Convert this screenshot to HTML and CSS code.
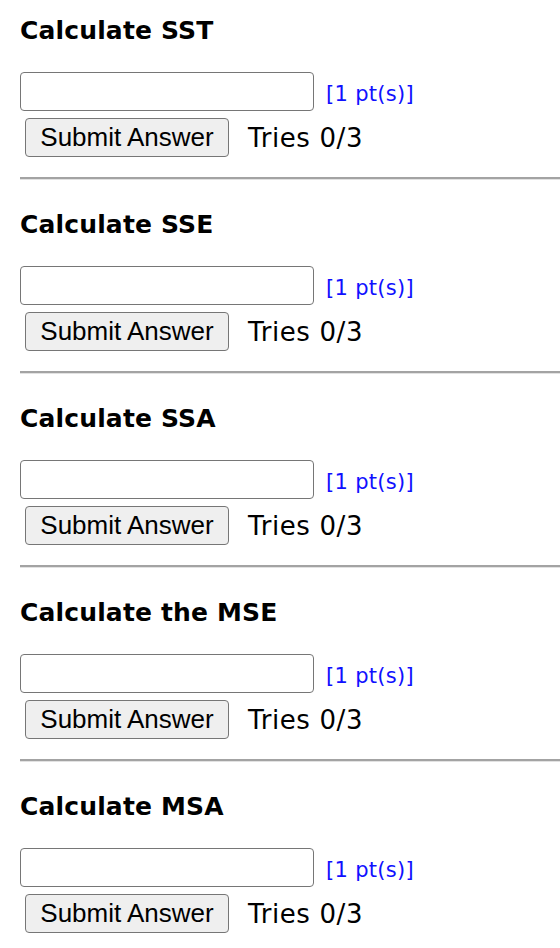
FILE: index.html
```html
<!DOCTYPE html>
<html lang="en">
<head>
    <meta charset="UTF-8">
    <meta name="viewport" content="width=device-width, initial-scale=1.0">
    <title>ANOVA questions</title>
    <link rel="stylesheet" href="styles.css">
</head>
<body>
    <div class="question">
        <h3>Calculate SST</h3>
        <div class="answer-row">
            <input type="text" class="answer">
            <span class="points">[1 pt(s)]</span>
        </div>
        <div class="submit-row">
            <button>Submit Answer</button>
            <span class="tries">Tries 0/3</span>
        </div>
    </div>
    <hr>

    <div class="question">
        <h3>Calculate SSE</h3>
        <div class="answer-row">
            <input type="text" class="answer">
            <span class="points">[1 pt(s)]</span>
        </div>
        <div class="submit-row">
            <button>Submit Answer</button>
            <span class="tries">Tries 0/3</span>
        </div>
    </div>
    <hr>

    <div class="question">
        <h3>Calculate SSA</h3>
        <div class="answer-row">
            <input type="text" class="answer">
            <span class="points">[1 pt(s)]</span>
        </div>
        <div class="submit-row">
            <button>Submit Answer</button>
            <span class="tries">Tries 0/3</span>
        </div>
    </div>
    <hr>

    <div class="question">
        <h3>Calculate the MSE</h3>
        <div class="answer-row">
            <input type="text" class="answer">
            <span class="points">[1 pt(s)]</span>
        </div>
        <div class="submit-row">
            <button>Submit Answer</button>
            <span class="tries">Tries 0/3</span>
        </div>
    </div>
    <hr>

    <div class="question">
        <h3>Calculate MSA</h3>
        <div class="answer-row">
            <input type="text" class="answer">
            <span class="points">[1 pt(s)]</span>
        </div>
        <div class="submit-row">
            <button>Submit Answer</button>
            <span class="tries">Tries 0/3</span>
        </div>
    </div>
</body>
</html>
```

FILE: styles.css
```css
body {
    margin: 0;
    padding: 0 0 0 20px;
    font-family: "DejaVu Sans", Verdana, sans-serif;
    color: #000;
    background: #fff;
}
.question h3 {
    margin: 16px 0 26px;
    font-size: 25px;
    line-height: 30px;
    font-weight: bold;
    letter-spacing: 0.15px;
}
.answer-row {
    display: flex;
    align-items: center;
    gap: 12px;
    height: 39px;
}
.answer {
    box-sizing: border-box;
    width: 294px;
    height: 39px;
    margin: 0;
    border: 1px solid #767676;
    border-radius: 4px;
    background: #fff;
}
.points {
    color: #1010ff;
    font-size: 21px;
    letter-spacing: 0.3px;
    margin-top: 4px;
}
.submit-row {
    display: flex;
    align-items: center;
    gap: 19px;
    margin-top: 7px;
    padding-left: 5px;
    height: 39px;
}
button {
    box-sizing: border-box;
    width: 204px;
    height: 39px;
    margin: 0;
    padding: 0;
    font-family: "Liberation Sans", Arial, sans-serif;
    font-size: 26px;
    color: #000;
    background: #efefef;
    border: 1px solid #767676;
    border-radius: 4px;
}
.tries {
    font-size: 26px;
    letter-spacing: 0.6px;
}
hr {
    margin: 20px 0 30px;
    height: 0;
    border: none;
    border-top: 2px solid #a3a3a3;
    border-bottom: 1px solid #e2e2e2;
}
```
